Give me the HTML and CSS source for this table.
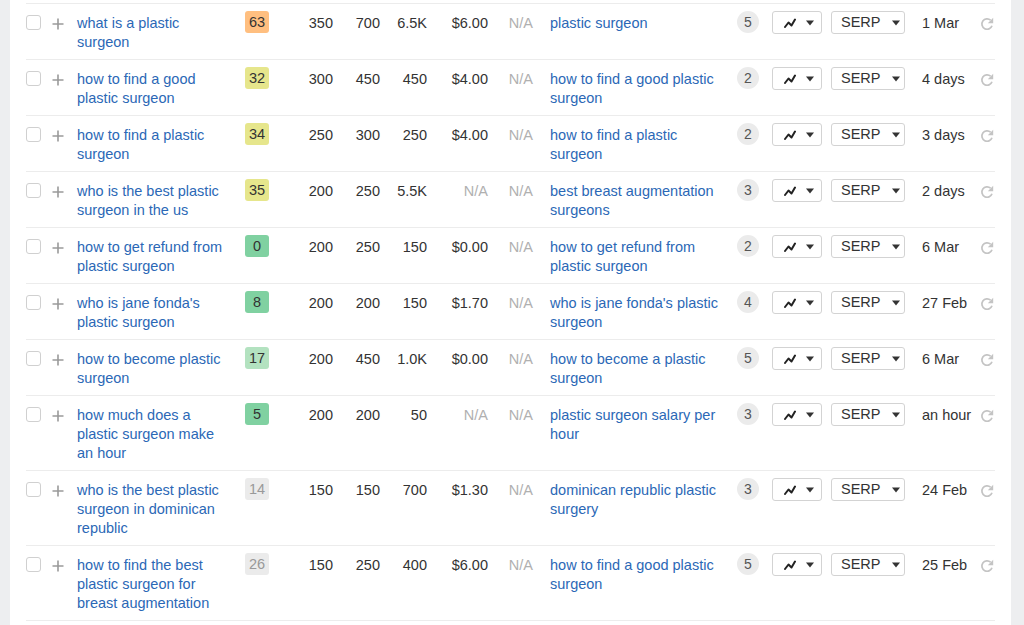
FILE: index.html
```html
<!DOCTYPE html>
<html>
<head>
<meta charset="utf-8">
<link rel="stylesheet" href="styles.css">
</head>
<body>
<svg width="0" height="0" class="defs">
  <symbol id="plus" viewBox="0 0 12 12"><path d="M6 0.5V11.5M0.5 6H11.5" stroke="#9a9a9a" stroke-width="1.6" fill="none"/></symbol>
  <symbol id="chart" viewBox="0 0 12 10"><path d="M1 9L4.5 4.5L7.5 7.5L11 1.5" stroke="#222" stroke-width="2" fill="none" stroke-linejoin="round" stroke-linecap="round"/></symbol>
  <symbol id="caret" viewBox="0 0 8 6"><path d="M0 0.5H8L4 5.5Z" fill="#333"/></symbol>
  <symbol id="refresh" viewBox="0 0 14 14"><path d="M12 8.8A5.2 5.2 0 1 1 10.6 3.2" stroke="#c4c4c4" stroke-width="1.7" fill="none"/><path d="M13.2 0.8L13.2 6.2L7.8 6.2Z" fill="#c4c4c4"/></symbol>
</svg>
<div class="panel">
  <div class="table">
    <div class="row">
      <span class="cb"></span><span class="plus"><svg><use href="#plus"/></svg></span>
      <a class="kw">what is a plastic surgeon</a>
      <span class="kdc"><span class="kd kd-orange">63</span></span>
      <span class="num">350</span><span class="num">700</span><span class="num">6.5K</span><span class="num">$6.00</span><span class="num na">N/A</span>
      <a class="pt">plastic surgeon</a>
      <span class="cc"><span class="circ">5</span></span>
      <span class="bc"><span class="btn chartbtn"><svg class="ic"><use href="#chart"/></svg><svg class="car"><use href="#caret"/></svg></span></span>
      <span class="bc"><span class="btn serp">SERP<svg class="car"><use href="#caret"/></svg></span></span>
      <span class="date">1 Mar</span>
      <span class="rf"><svg><use href="#refresh"/></svg></span>
    </div>
    <div class="row">
      <span class="cb"></span><span class="plus"><svg><use href="#plus"/></svg></span>
      <a class="kw">how to find a good plastic surgeon</a>
      <span class="kdc"><span class="kd kd-yellow">32</span></span>
      <span class="num">300</span><span class="num">450</span><span class="num">450</span><span class="num">$4.00</span><span class="num na">N/A</span>
      <a class="pt">how to find a good plastic surgeon</a>
      <span class="cc"><span class="circ">2</span></span>
      <span class="bc"><span class="btn chartbtn"><svg class="ic"><use href="#chart"/></svg><svg class="car"><use href="#caret"/></svg></span></span>
      <span class="bc"><span class="btn serp">SERP<svg class="car"><use href="#caret"/></svg></span></span>
      <span class="date">4 days</span>
      <span class="rf"><svg><use href="#refresh"/></svg></span>
    </div>
    <div class="row">
      <span class="cb"></span><span class="plus"><svg><use href="#plus"/></svg></span>
      <a class="kw">how to find a plastic surgeon</a>
      <span class="kdc"><span class="kd kd-yellow">34</span></span>
      <span class="num">250</span><span class="num">300</span><span class="num">250</span><span class="num">$4.00</span><span class="num na">N/A</span>
      <a class="pt">how to find a plastic surgeon</a>
      <span class="cc"><span class="circ">2</span></span>
      <span class="bc"><span class="btn chartbtn"><svg class="ic"><use href="#chart"/></svg><svg class="car"><use href="#caret"/></svg></span></span>
      <span class="bc"><span class="btn serp">SERP<svg class="car"><use href="#caret"/></svg></span></span>
      <span class="date">3 days</span>
      <span class="rf"><svg><use href="#refresh"/></svg></span>
    </div>
    <div class="row">
      <span class="cb"></span><span class="plus"><svg><use href="#plus"/></svg></span>
      <a class="kw">who is the best plastic surgeon in the us</a>
      <span class="kdc"><span class="kd kd-yellow">35</span></span>
      <span class="num">200</span><span class="num">250</span><span class="num">5.5K</span><span class="num na">N/A</span><span class="num na">N/A</span>
      <a class="pt">best breast augmentation surgeons</a>
      <span class="cc"><span class="circ">3</span></span>
      <span class="bc"><span class="btn chartbtn"><svg class="ic"><use href="#chart"/></svg><svg class="car"><use href="#caret"/></svg></span></span>
      <span class="bc"><span class="btn serp">SERP<svg class="car"><use href="#caret"/></svg></span></span>
      <span class="date">2 days</span>
      <span class="rf"><svg><use href="#refresh"/></svg></span>
    </div>
    <div class="row">
      <span class="cb"></span><span class="plus"><svg><use href="#plus"/></svg></span>
      <a class="kw">how to get refund from plastic surgeon</a>
      <span class="kdc"><span class="kd kd-green">0</span></span>
      <span class="num">200</span><span class="num">250</span><span class="num">150</span><span class="num">$0.00</span><span class="num na">N/A</span>
      <a class="pt">how to get refund from plastic surgeon</a>
      <span class="cc"><span class="circ">2</span></span>
      <span class="bc"><span class="btn chartbtn"><svg class="ic"><use href="#chart"/></svg><svg class="car"><use href="#caret"/></svg></span></span>
      <span class="bc"><span class="btn serp">SERP<svg class="car"><use href="#caret"/></svg></span></span>
      <span class="date">6 Mar</span>
      <span class="rf"><svg><use href="#refresh"/></svg></span>
    </div>
    <div class="row">
      <span class="cb"></span><span class="plus"><svg><use href="#plus"/></svg></span>
      <a class="kw">who is jane fonda's plastic surgeon</a>
      <span class="kdc"><span class="kd kd-green">8</span></span>
      <span class="num">200</span><span class="num">200</span><span class="num">150</span><span class="num">$1.70</span><span class="num na">N/A</span>
      <a class="pt">who is jane fonda's plastic surgeon</a>
      <span class="cc"><span class="circ">4</span></span>
      <span class="bc"><span class="btn chartbtn"><svg class="ic"><use href="#chart"/></svg><svg class="car"><use href="#caret"/></svg></span></span>
      <span class="bc"><span class="btn serp">SERP<svg class="car"><use href="#caret"/></svg></span></span>
      <span class="date">27 Feb</span>
      <span class="rf"><svg><use href="#refresh"/></svg></span>
    </div>
    <div class="row">
      <span class="cb"></span><span class="plus"><svg><use href="#plus"/></svg></span>
      <a class="kw">how to become plastic surgeon</a>
      <span class="kdc"><span class="kd kd-lgreen">17</span></span>
      <span class="num">200</span><span class="num">450</span><span class="num">1.0K</span><span class="num">$0.00</span><span class="num na">N/A</span>
      <a class="pt">how to become a plastic surgeon</a>
      <span class="cc"><span class="circ">5</span></span>
      <span class="bc"><span class="btn chartbtn"><svg class="ic"><use href="#chart"/></svg><svg class="car"><use href="#caret"/></svg></span></span>
      <span class="bc"><span class="btn serp">SERP<svg class="car"><use href="#caret"/></svg></span></span>
      <span class="date">6 Mar</span>
      <span class="rf"><svg><use href="#refresh"/></svg></span>
    </div>
    <div class="row">
      <span class="cb"></span><span class="plus"><svg><use href="#plus"/></svg></span>
      <a class="kw">how much does a plastic surgeon make an hour</a>
      <span class="kdc"><span class="kd kd-green">5</span></span>
      <span class="num">200</span><span class="num">200</span><span class="num">50</span><span class="num na">N/A</span><span class="num na">N/A</span>
      <a class="pt">plastic surgeon salary per hour</a>
      <span class="cc"><span class="circ">3</span></span>
      <span class="bc"><span class="btn chartbtn"><svg class="ic"><use href="#chart"/></svg><svg class="car"><use href="#caret"/></svg></span></span>
      <span class="bc"><span class="btn serp">SERP<svg class="car"><use href="#caret"/></svg></span></span>
      <span class="date">an hour</span>
      <span class="rf"><svg><use href="#refresh"/></svg></span>
    </div>
    <div class="row">
      <span class="cb"></span><span class="plus"><svg><use href="#plus"/></svg></span>
      <a class="kw">who is the best plastic surgeon in dominican republic</a>
      <span class="kdc"><span class="kd kd-gray">14</span></span>
      <span class="num">150</span><span class="num">150</span><span class="num">700</span><span class="num">$1.30</span><span class="num na">N/A</span>
      <a class="pt">dominican republic plastic surgery</a>
      <span class="cc"><span class="circ">3</span></span>
      <span class="bc"><span class="btn chartbtn"><svg class="ic"><use href="#chart"/></svg><svg class="car"><use href="#caret"/></svg></span></span>
      <span class="bc"><span class="btn serp">SERP<svg class="car"><use href="#caret"/></svg></span></span>
      <span class="date">24 Feb</span>
      <span class="rf"><svg><use href="#refresh"/></svg></span>
    </div>
    <div class="row">
      <span class="cb"></span><span class="plus"><svg><use href="#plus"/></svg></span>
      <a class="kw">how to find the best plastic surgeon for breast augmentation</a>
      <span class="kdc"><span class="kd kd-gray">26</span></span>
      <span class="num">150</span><span class="num">250</span><span class="num">400</span><span class="num">$6.00</span><span class="num na">N/A</span>
      <a class="pt">how to find a good plastic surgeon</a>
      <span class="cc"><span class="circ">5</span></span>
      <span class="bc"><span class="btn chartbtn"><svg class="ic"><use href="#chart"/></svg><svg class="car"><use href="#caret"/></svg></span></span>
      <span class="bc"><span class="btn serp">SERP<svg class="car"><use href="#caret"/></svg></span></span>
      <span class="date">25 Feb</span>
      <span class="rf"><svg><use href="#refresh"/></svg></span>
    </div>
  </div>
</div>
</body>
</html>
```
FILE: styles.css
```css
html, body {
  margin: 0;
  padding: 0;
  height: 100%;
  overflow: hidden;
}
body {
  background: #edeef0;
  font-family: "Liberation Sans", Arial, sans-serif;
  font-size: 14.5px;
  line-height: 19px;
  color: #333;
}
.defs {
  position: absolute;
}
.panel {
  background: #fff;
  margin: 0 13px 0 10px;
  padding: 3px 16px 0 16px;
  min-height: 100%;
  box-sizing: border-box;
}
.table {
  border-top: 1px solid #ececec;
}
.row {
  display: grid;
  grid-template-columns: 20px 31px 158px 50px 48px 47px 47px 61px 45px 204px 35px 59px 91px 56px 17px;
  align-items: start;
  padding: 10px 0 7px;
  border-bottom: 1px solid #ececec;
}
.cb {
  width: 13px;
  height: 13px;
  border: 1px solid #d0d0d0;
  border-radius: 3px;
  margin-top: 1px;
  background: #fff;
}
.plus {
  padding-left: 6px;
  height: 19px;
  display: flex;
  align-items: center;
}
.plus svg {
  width: 12px;
  height: 12px;
}
.kw, .pt {
  color: #2b68b6;
  text-decoration: none;
}
.kw {
  max-width: 152px;
}
.pt {
  padding-left: 17px;
  max-width: 174px;
}
.kdc {
  padding-left: 10px;
}
.kd {
  display: block;
  width: 24px;
  height: 22px;
  line-height: 22px;
  margin-top: -3px;
  border-radius: 3px;
  text-align: center;
  color: #333;
}
.kd-orange { background: #ffbf80; }
.kd-yellow { background: #e6e68c; }
.kd-green { background: #80d1a1; }
.kd-lgreen { background: #b3e2c0; }
.kd-gray { background: #ebebeb; color: #999; }
.num {
  text-align: right;
}
.na {
  color: #b0b0b0;
}
.circ {
  display: block;
  width: 22px;
  height: 22px;
  line-height: 22px;
  margin-top: -3px;
  border-radius: 50%;
  background: #ebebeb;
  color: #555;
  font-size: 14px;
  text-align: center;
}
.btn {
  display: flex;
  align-items: center;
  box-sizing: border-box;
  height: 23px;
  margin-top: -3px;
  border: 1px solid #d3d3d3;
  border-radius: 3px;
  background: #fff;
}
.chartbtn {
  width: 50px;
  padding-left: 11px;
}
.chartbtn .ic {
  width: 12px;
  height: 10px;
}
.chartbtn .car {
  margin-left: 10px;
}
.car {
  width: 8px;
  height: 6px;
}
.serp {
  width: 74px;
  padding-left: 9px;
  color: #333;
}
.serp .car {
  margin-left: 11px;
}
.date {
  white-space: nowrap;
}
.rf {
  height: 19px;
  display: flex;
  align-items: center;
  padding-left: 2px;
}
.rf svg {
  width: 14px;
  height: 14px;
}
```
